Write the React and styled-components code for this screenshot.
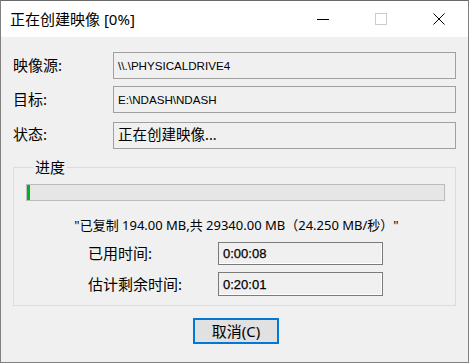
import React from 'react';
import styled, { createGlobalStyle } from 'styled-components';

const GlobalStyle = createGlobalStyle`
  html, body {
    margin: 0;
    padding: 0;
    background: #f0f0f0;
  }
  * {
    box-sizing: border-box;
  }
`;

const cjk = `"Noto Sans", "Noto Sans CJK SC", sans-serif`;
const dlg = `"Liberation Sans", "Noto Sans CJK SC", sans-serif`;

const Window = styled.div`
  width: 469px;
  height: 363px;
  border: 1px solid #808080;
  border-top-color: #6a6a6a;
  display: flex;
  flex-direction: column;
  background: #f0f0f0;
  font-family: ${cjk};
  color: #000;
`;

const TitleBar = styled.div`
  height: 36px;
  background: #fff;
  display: flex;
  align-items: center;
`;

const Title = styled.div`
  flex: 1;
  padding-left: 9px;
  font-size: 15px;
  line-height: 20px;
`;

const CaptionButton = styled.div`
  width: 58px;
  height: 36px;
  display: flex;
  align-items: center;
  justify-content: center;
`;

const Body = styled.div`
  flex: 1;
  padding: 15px 12px 0 12px;
  display: flex;
  flex-direction: column;
`;

const FieldGrid = styled.div`
  display: grid;
  grid-template-columns: 100px 343px;
  grid-auto-rows: 27px;
  row-gap: 7px;
`;

const Label = styled.div`
  font-size: 15px;
  line-height: 19px;
  display: flex;
  align-items: center;
  margin-top: ${(p) => p.$shift || 0}px;
`;

const Field = styled.div`
  border: 1px solid #a0a0a0;
  display: flex;
  align-items: center;
  padding-left: 4px;
  font-family: ${(p) => (p.$cjk ? cjk : dlg)};
  font-size: ${(p) => (p.$cjk ? 14.5 : 11.6)}px;
  padding-bottom: ${(p) => (p.$cjk ? 4 : 0)}px;
  margin-top: ${(p) => p.$shift || 0}px;
  height: 27px;
`;

const Group = styled.fieldset`
  margin: 11px 0 0 0;
  width: 443px;
  border: 1px solid #dcdcdc;
  padding: 8px 10px 9px 12px;
`;

const Legend = styled.legend`
  margin-left: 7px;
  padding: 0 2px;
  font-size: 15px;
  line-height: 18px;
`;

const Progress = styled.div`
  height: 17px;
  border: 1px solid #bcbcbc;
  background: #e6e6e6;
  display: flex;
`;

const ProgressFill = styled.div`
  height: 100%;
  background: #06b025;
`;

const Stats = styled.div`
  margin-top: 15px;
  text-align: center;
  font-size: 13px;
  line-height: 18px;
  padding-left: 2px;
`;

const TimeGrid = styled.div`
  margin: 8px 0 0 62px;
  display: grid;
  grid-template-columns: 130px 165px;
  grid-template-rows: 23px 24px;
  row-gap: 7px;
`;

const TimeBox = styled.div`
  border: 1px solid #7a7a7a;
  box-shadow: inset -1px -1px 0 #fff;
  display: flex;
  align-items: center;
  padding-left: 4px;
  font-family: ${dlg};
  font-size: 13px;
  -webkit-text-stroke: 0.25px #000;
`;

const Footer = styled.div`
  display: flex;
  justify-content: center;
  padding-top: 12px;
  padding-left: 3px;
`;

const Button = styled.button`
  width: 86px;
  height: 26px;
  border: 2px solid #0078d7;
  background: #e1e1e1;
  font-family: ${cjk};
  font-size: 15px;
  line-height: 18px;
  padding: 0 0 1px 0;
  color: #000;
`;

const progress = 0.7;

export default function App() {
  return (
    <>
      <GlobalStyle />
      <Window>
        <TitleBar>
          <Title>正在创建映像 [0%]</Title>
          <CaptionButton>
            <svg width="12" height="12" viewBox="0 0 12 12">
              <path d="M0 6.5h12" stroke="#000" strokeWidth="1" />
            </svg>
          </CaptionButton>
          <CaptionButton>
            <svg width="12" height="12" viewBox="0 0 12 12">
              <rect x="0.5" y="0.5" width="11" height="11" fill="none" stroke="#cccccc" />
            </svg>
          </CaptionButton>
          <CaptionButton>
            <svg width="12" height="12" viewBox="0 0 12 12">
              <path d="M0.5 0.5L11.5 11.5M11.5 0.5L0.5 11.5" stroke="#000" strokeWidth="1" />
            </svg>
          </CaptionButton>
        </TitleBar>
        <Body>
          <FieldGrid>
            <Label>映像源:</Label>
            <Field>\\.\PHYSICALDRIVE4</Field>
            <Label>目标:</Label>
            <Field>E:\NDASH\NDASH</Field>
            <Label $shift={2}>状态:</Label>
            <Field $cjk $shift={2}>正在创建映像...</Field>
          </FieldGrid>
          <Group>
            <Legend>进度</Legend>
            <Progress>
              <ProgressFill style={{ width: `${progress}%` }} />
            </Progress>
            <Stats>"已复制 194.00 MB,共 29340.00 MB（24.250 MB/秒）"</Stats>
            <TimeGrid>
              <Label>已用时间:</Label>
              <TimeBox>0:00:08</TimeBox>
              <Label>估计剩余时间:</Label>
              <TimeBox>0:20:01</TimeBox>
            </TimeGrid>
          </Group>
          <Footer>
            <Button>取消(C)</Button>
          </Footer>
        </Body>
      </Window>
    </>
  );
}
